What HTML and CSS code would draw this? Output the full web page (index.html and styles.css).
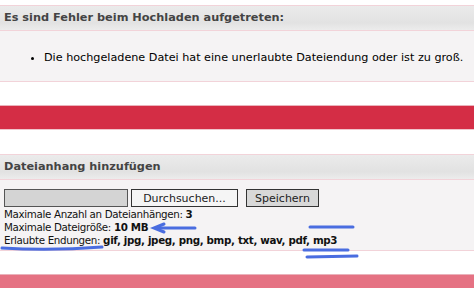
FILE: index.html
```html
<!DOCTYPE html>
<html lang="de">
<head>
    <meta charset="UTF-8">
    <title>Dateianhang</title>
    <link rel="stylesheet" href="styles.css">
</head>
<body>
    <div class="panel">
        <div class="panel-head">Es sind Fehler beim Hochladen aufgetreten:</div>
        <div class="panel-body errors">
            <ul>
                <li>Die hochgeladene Datei hat eine unerlaubte Dateiendung oder ist zu groß.</li>
            </ul>
        </div>
    </div>

    <div class="bar"></div>

    <div class="panel second">
        <div class="panel-head">Dateianhang hinzufügen</div>
        <div class="panel-body upload">
            <div class="upload-row">
                <span class="file-box"></span>
                <button type="button" class="browse">Durchsuchen...</button>
                <button type="button" class="save">Speichern</button>
            </div>
            <div class="info">Maximale Anzahl an Dateianhängen: <b>3</b></div>
            <div class="info">Maximale Dateigröße: <b>10 MB</b></div>
            <div class="info">Erlaubte Endungen: <b>gif, jpg, jpeg, png, bmp, txt, wav, pdf, mp3</b></div>
        </div>
    </div>

    <div class="bar light"></div>

    <svg class="marks" width="474" height="288" viewBox="0 0 474 288">
        <g stroke="#4a6de0" stroke-width="3" stroke-linecap="round" fill="none">
            <path d="M195 228 L157 228"/>
            <path d="M164 224 L154 228 L164 232"/>
            <path d="M2 248 Q50 251 102 247"/>
            <path d="M310 227 L353 227"/>
            <path d="M304 250 L348 250"/>
            <path d="M307 257 L357 256"/>
        </g>
    </svg>
</body>
</html>
```

FILE: styles.css
```css
body {
    margin: 0;
    background: #fff;
    font-family: "DejaVu Sans", Verdana, sans-serif;
    color: #000;
    width: 474px;
    height: 288px;
    overflow: hidden;
    position: relative;
}
.panel {
    margin-top: 5px;
    border-top: 1px solid #f2d3d9;
    border-bottom: 1px solid #f2d3d9;
}
.panel.second {
    margin-top: 24px;
}
.panel-head {
    height: 24px;
    line-height: 23px;
    padding-left: 4px;
    font-size: 11.3px;
    font-weight: bold;
    color: #444;
    background: linear-gradient(#ebebeb, #e2e2e2 70%, #ececec);
    border-bottom: 1px solid #f2d3d9;
}
.panel-body {
    background: #f5f3f4;
}
.errors {
    height: 50px;
    font-size: 11.2px;
}
.errors ul {
    margin: 0;
    padding: 20px 0 0 44px;
}
.upload {
    height: 70px;
    padding: 9px 0 0 4px;
    box-sizing: border-box;
    font-size: 10.3px;
}
.upload-row {
    display: flex;
    align-items: center;
    height: 18px;
    margin-bottom: 1px;
}
.file-box {
    width: 122px;
    height: 16px;
    background: #d4d4d4;
    border: 1px solid #555;
}
button {
    font-family: "DejaVu Sans", Verdana, sans-serif;
    font-size: 11px;
    height: 18px;
    padding: 0;
    border: 1px solid #333;
    color: #222;
}
.browse {
    width: 107px;
    margin-left: 3px;
    background: #f5f5f5;
}
.save {
    width: 73px;
    margin-left: 8px;
    background: #d8d8d8;
}
.info {
    line-height: 13px;
    letter-spacing: -0.33px;
    color: #111;
}
.bar {
    height: 23px;
    margin-top: 23px;
    background: #d42d45;
    border-top: 1px solid #eab2bb;
    border-bottom: 1px solid #f0c4cb;
}
.bar.light {
    height: 13px;
    margin-top: 23px;
    background: #e57283;
    border-bottom: none;
}
.marks {
    position: absolute;
    left: 0;
    top: 0;
    pointer-events: none;
}
```
